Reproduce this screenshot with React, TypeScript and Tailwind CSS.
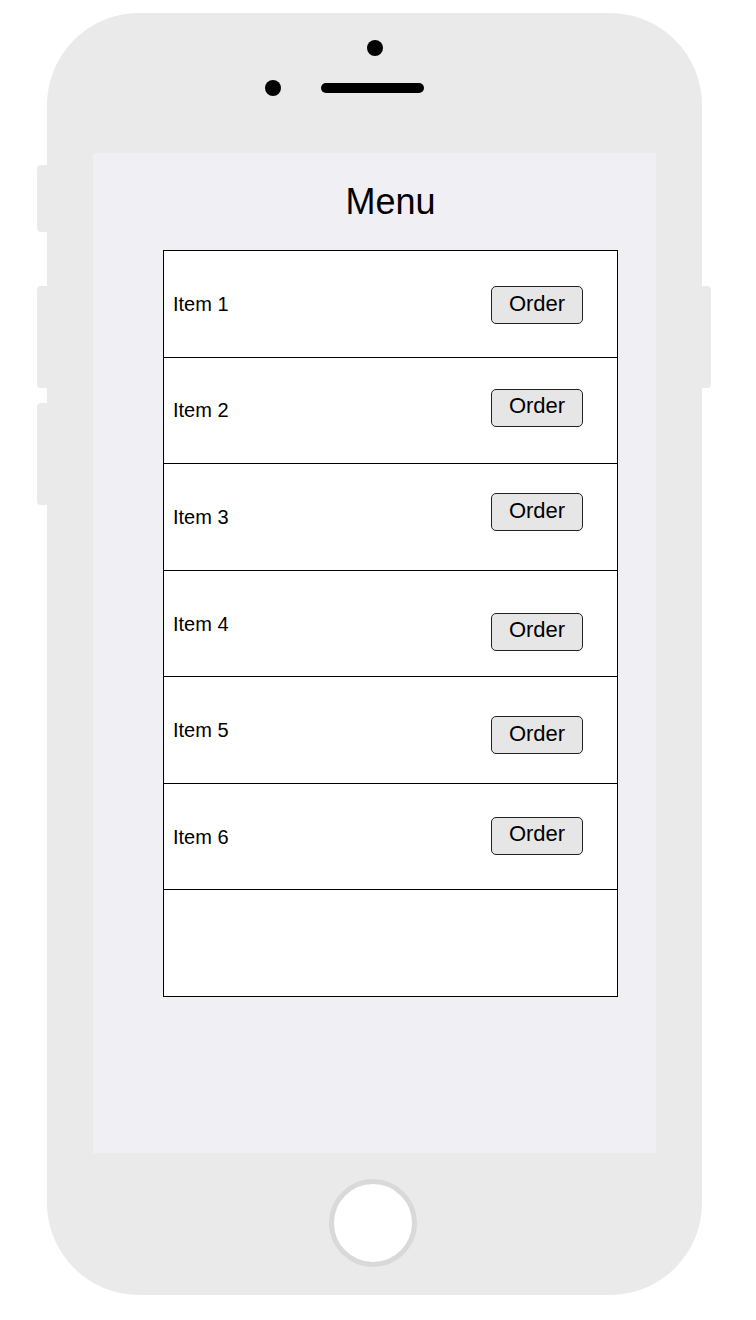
import React from 'react';

const items = [
  { name: 'Item 1', btn: 'mt-[35px]' },
  { name: 'Item 2', btn: 'mt-[31px]' },
  { name: 'Item 3', btn: 'mt-[29px]' },
  { name: 'Item 4', btn: 'mt-[42px]' },
  { name: 'Item 5', btn: 'mt-[39px]' },
  { name: 'Item 6', btn: 'mt-[33px]' },
];

const App = () => {
  return (
    <div
      className="min-h-[1320px] w-[756px] bg-white pt-[13px] pl-[37px] flex items-start"
      style={{ fontFamily: '"Liberation Sans", Arial, sans-serif' }}
    >
      {/* left side keys */}
      <div className="w-[10px] flex flex-col shrink-0">
        <div className="mt-[152px] h-[67px] w-[10px] rounded-l-[4px] bg-[#eaeaea]"></div>
        <div className="mt-[54px] h-[102px] w-[10px] rounded-l-[4px] bg-[#eaeaea]"></div>
        <div className="mt-[15px] h-[102px] w-[10px] rounded-l-[4px] bg-[#eaeaea]"></div>
      </div>

      {/* phone body */}
      <div className="w-[655px] h-[1282px] shrink-0 rounded-[92px] bg-[#eaeaea] flex flex-col items-center">
        <div className="mt-[27px] w-[16px] h-[16px] rounded-full bg-black"></div>
        <div className="mt-[24px] w-full pl-[218px] flex items-center">
          <div className="w-[16px] h-[16px] rounded-full bg-black"></div>
          <div className="ml-[40px] w-[103px] h-[10px] rounded-full bg-black"></div>
        </div>

        {/* screen */}
        <div className="mt-[57px] w-[563px] h-[1000px] bg-[#efeff4] pt-[29px] pl-[70px] pr-[38px] flex flex-col">
          <h1 className="h-[40px] leading-[40px] text-[36px] text-black text-center">Menu</h1>
          <div className="mt-[28px] h-[747px] border border-black bg-white flex flex-col">
            {items.map((it) => (
              <div key={it.name} className="flex-1 border-b border-black flex justify-between pl-[9px] pr-[34px]">
                <span className="self-center text-[20px] leading-[20px] text-black">{it.name}</span>
                <button
                  className={`${it.btn} self-start w-[92px] h-[38px] rounded-[5px] border border-[#222] bg-[#e6e6e6] text-[22px] leading-[22px] text-black pb-[3px]`}
                >
                  Order
                </button>
              </div>
            ))}
            <div className="flex-1"></div>
          </div>
        </div>

        {/* home button */}
        <div className="mt-[26px] mr-[3px] w-[88px] h-[88px] rounded-full border-[5px] border-[#d9d9d9] bg-white"></div>
      </div>

      {/* right side key */}
      <div className="w-[9px] flex flex-col shrink-0">
        <div className="mt-[273px] h-[102px] w-[9px] rounded-r-[4px] bg-[#eaeaea]"></div>
      </div>
    </div>
  );
};

export default App;
